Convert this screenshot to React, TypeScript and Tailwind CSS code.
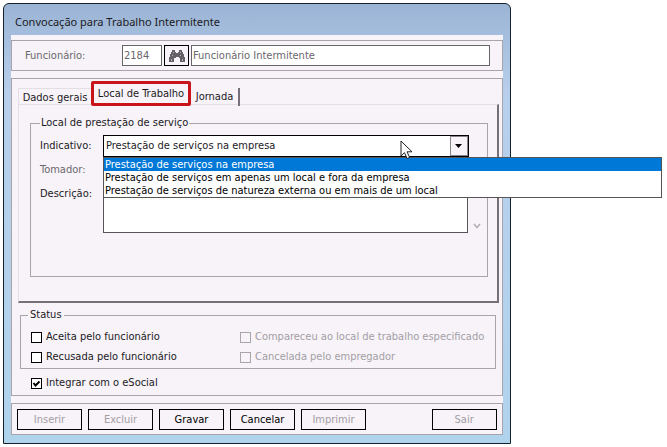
import { useState } from "react";

const tabs = ["Dados gerais", "Local de Trabalho", "Jornada"];

const places = [
  "Prestação de serviços na empresa",
  "Prestação de serviços em apenas um local e fora da empresa",
  "Prestação de serviços de natureza externa ou em mais de um local",
];

const actions = [
  { label: "Inserir", disabled: true },
  { label: "Excluir", disabled: true },
  { label: "Gravar", disabled: false },
  { label: "Cancelar", disabled: false },
  { label: "Imprimir", disabled: true },
];

function Binoculars() {
  return (
    <svg viewBox="0 0 16 14" className="h-[14px] w-4" aria-hidden>
      <path
        d="M3 1h3v2h1v1h2V3h1V1h3v2h1v2h1v3h1v5h-5V9h-1V8H7v1H5v4H0V8h1V5h1V3h1z"
        fill="#666166"
      />
      <path
        d="M4 3h1v1H4zM11 3h1v1h-1zM3 6h1v1H3zM11 6h1v1h-1zM2 10h1v2H2zM13 10h1v2h-1z"
        fill="#b5b0b6"
      />
    </svg>
  );
}

function Check({
  id,
  label,
  disabled,
  defaultChecked,
}: {
  id: string;
  label: string;
  disabled?: boolean;
  defaultChecked?: boolean;
}) {
  return (
    <div className="flex h-5 items-center gap-1">
      <span className="relative flex">
        <input
          id={id}
          type="checkbox"
          disabled={disabled}
          defaultChecked={defaultChecked}
          className="peer size-[11px] appearance-none border border-black bg-white disabled:border-[#aaa5ab] disabled:bg-transparent"
        />
        <svg
          viewBox="0 0 11 11"
          className="pointer-events-none absolute inset-0 hidden peer-checked:block"
          aria-hidden
        >
          <path d="M2.5 5l2 2.5L8.5 3.5" fill="none" stroke="#000" strokeWidth="2" />
        </svg>
      </span>
      <label
        htmlFor={id}
        className={disabled ? "whitespace-nowrap text-[#a39ea5]" : "whitespace-nowrap"}
      >
        {label}
      </label>
    </div>
  );
}

export default function App() {
  const [tab, setTab] = useState(1);
  const [place, setPlace] = useState(0);

  return (
    <main className="p-[3px] font-['DejaVu_Sans_Condensed',Tahoma,sans-serif] text-[11px] leading-4 text-[#1c1a1e]">
      <section className="w-[76.8%] rounded-t-md border border-[#14202c] bg-linear-to-b from-[#9bb4d5] via-[#b7cfeb] via-20% to-[#b0d3ec] px-[7px] pb-2">
        <h1 className="flex h-[31px] items-center px-1 pt-1 font-['Noto_Sans',sans-serif]">
          Convocação para Trabalho Intermitente
        </h1>

        <div className="bg-[#f7f3f8] pt-[5px]">
          {/* funcionário */}
          <div className="flex items-center border border-[#aaa3ab] py-1 pr-3 pl-[13px]">
            <label htmlFor="codigo" className="w-[97px] text-[#6b676d]">
              Funcionário:
            </label>
            <input
              id="codigo"
              readOnly
              value="2184"
              className="h-[21px] w-10 border border-[#666] bg-white px-px text-[#6b676d]"
            />
            <button
              type="button"
              aria-label="Pesquisar"
              className="mx-[2px] flex h-[21px] w-[25px] shrink-0 items-center justify-center border border-black"
            >
              <Binoculars />
            </button>
            <input
              aria-label="Nome"
              readOnly
              value="Funcionário Intermitente"
              className="h-[21px] min-w-0 flex-1 border border-[#666] bg-white px-px text-[#6b676d]"
            />
          </div>

          <div className="mt-[7px] border border-[#aaa3ab] pt-[2px] pr-[3px] pb-[2px] pl-[6px]">
            {/* abas */}
            <div role="tablist" className="relative -mb-[2px] flex items-end">
              {tabs.map((t, i) => (
                <button
                  key={t}
                  type="button"
                  role="tab"
                  aria-selected={i === tab}
                  onClick={() => setTab(i)}
                  className={
                    i === tab
                      ? "h-[25px] w-[100px] rounded-xs border-3 border-[#c8151b] bg-[#f7f3f8] whitespace-nowrap"
                      : i === 0
                        ? "h-[18px] w-[73px] border-t border-l border-[#e4dfe5] whitespace-nowrap"
                        : "h-[18px] w-[49px] border-r-2 border-[#777078] whitespace-nowrap"
                  }
                >
                  {t}
                </button>
              ))}
            </div>

            <div className="border-t border-r-2 border-b-2 border-l border-t-[#e4dfe5] border-r-[#777078] border-b-[#777078] border-l-[#e4dfe5] pt-[10px] pr-[9px] pb-6 pl-[11px]">
              <fieldset className="border border-[#aaa3ab] pr-[18px] pb-[43px] pl-[9px]">
                <legend className="px-px">Local de prestação de serviço</legend>

                <div className="flex items-center pt-1">
                  <label htmlFor="indicativo" className="w-[63px] shrink-0">
                    Indicativo:
                  </label>
                  <div className="relative min-w-0 flex-1">
                    <select
                      id="indicativo"
                      value={place}
                      onChange={(e) => setPlace(Number(e.target.value))}
                      className="block h-[22px] w-full appearance-none border border-black bg-white px-[2px]"
                    >
                      {places.map((p, i) => (
                        <option key={p} value={i}>
                          {p}
                        </option>
                      ))}
                    </select>
                    <span className="pointer-events-none absolute inset-y-px right-px flex w-[18px] items-center justify-center border border-[#8a858b] bg-[#f7f3f8]">
                      <svg viewBox="0 0 7 4" className="h-1 w-[7px]" aria-hidden>
                        <path d="M0 0h7L3.5 4z" fill="#000" />
                      </svg>
                    </span>

                    {/* lista aberta */}
                    <ul className="absolute top-full left-0 z-10 w-[153%] border border-[#555] bg-white leading-[13px] text-black">
                      {places.map((p, i) => (
                        <li
                          key={p}
                          onClick={() => setPlace(i)}
                          className={
                            i === place
                              ? "bg-[#0078d7] px-px whitespace-nowrap text-white"
                              : "px-px whitespace-nowrap"
                          }
                        >
                          {p}
                        </li>
                      ))}
                    </ul>

                    <svg
                      viewBox="0 0 13 20"
                      className="pointer-events-none absolute top-[5px] right-[56px] z-20 h-5 w-[13px]"
                      aria-hidden
                    >
                      <path
                        d="M1 1v15l3.5-3.3L7 18.5l2.6-1.1-2.5-5.6H12z"
                        fill="#fff"
                        stroke="#222"
                      />
                    </svg>
                  </div>
                </div>

                <div className="flex items-center pt-[2px]">
                  <label htmlFor="tomador" className="w-[63px] shrink-0 text-[#6b676d]">
                    Tomador:
                  </label>
                  <input
                    id="tomador"
                    disabled
                    className="h-[21px] min-w-0 flex-1 border border-[#666] bg-white"
                  />
                </div>

                <div className="flex pt-1">
                  <label htmlFor="descricao" className="w-[63px] shrink-0 pt-[2px]">
                    Descrição:
                  </label>
                  <textarea
                    id="descricao"
                    className="mr-px block h-[49px] min-w-0 flex-1 resize-none border border-[#555] bg-white"
                  />
                  <span className="-mr-4 flex w-4 items-end justify-center pb-1">
                    <svg viewBox="0 0 8 6" className="h-[6px] w-2" aria-hidden>
                      <path d="M1 1l3 3.5L7 1" fill="none" stroke="#b5b0b6" strokeWidth="1.6" />
                    </svg>
                  </span>
                </div>
              </fieldset>
            </div>

            <div className="pt-1 pr-[3px] pl-[2px]">
              <fieldset className="grid grid-cols-[209px_1fr] border border-[#aaa3ab] pt-1 pb-px pl-[10px]">
                <legend className="-ml-[3px] px-[2px]">Status</legend>
                <Check id="aceita" label="Aceita pelo funcionário" />
                <Check id="compareceu" label="Compareceu ao local de trabalho especificado" disabled />
                <Check id="recusada" label="Recusada pelo funcionário" />
                <Check id="cancelada" label="Cancelada pelo empregador" disabled />
              </fieldset>
              <div className="pt-1 pl-[11px]">
                <Check id="esocial" label="Integrar com o eSocial" defaultChecked />
              </div>
            </div>
          </div>

          <footer className="mt-[7px] flex gap-[6px] border border-[#aaa3ab] px-[5px] pt-[5px] pb-1">
            {actions.map((a) => (
              <button
                key={a.label}
                type="button"
                disabled={a.disabled}
                className="h-[21px] w-[65px] border border-black text-black disabled:text-[#a39ea5]"
              >
                {a.label}
              </button>
            ))}
            <button
              type="button"
              disabled
              className="ml-auto h-[21px] w-[65px] border border-black text-black disabled:text-[#a39ea5]"
            >
              Sair
            </button>
          </footer>
        </div>
      </section>
    </main>
  );
}
